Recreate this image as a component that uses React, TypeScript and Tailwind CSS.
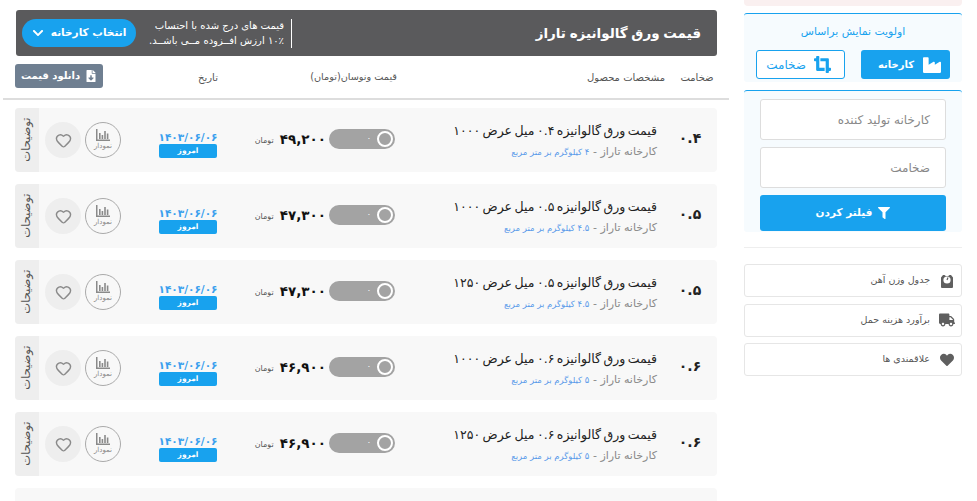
import React from "react";
import { FaChevronDown, FaFilter, FaTruck, FaHeart, FaFileDownload, FaIndustry, FaCropAlt } from "react-icons/fa";
import { Heart } from "lucide-react";

const rows = [
  { t: "۰.۴", title: "قیمت ورق گالوانیزه ۰.۴ میل عرض ۱۰۰۰", w: "۴", price: "۴۹,۲۰۰" },
  { t: "۰.۵", title: "قیمت ورق گالوانیزه ۰.۵ میل عرض ۱۰۰۰", w: "۴.۵", price: "۴۷,۳۰۰" },
  { t: "۰.۵", title: "قیمت ورق گالوانیزه ۰.۵ میل عرض ۱۲۵۰", w: "۴.۵", price: "۴۷,۳۰۰" },
  { t: "۰.۶", title: "قیمت ورق گالوانیزه ۰.۶ میل عرض ۱۰۰۰", w: "۵", price: "۴۶,۹۰۰" },
  { t: "۰.۶", title: "قیمت ورق گالوانیزه ۰.۶ میل عرض ۱۲۵۰", w: "۵", price: "۴۶,۹۰۰" },
];

function ChartIcon() {
  return (
    <svg width="14" height="12" viewBox="0 0 14 12" fill="#8a8a8a">
      <rect x="0" y="0" width="1.5" height="12" />
      <rect x="0" y="10.5" width="14" height="1.5" />
      <rect x="3" y="4" width="1.6" height="6" />
      <rect x="5.6" y="6" width="1.6" height="4" />
      <rect x="8.2" y="2" width="1.6" height="8" />
      <rect x="10.8" y="4.500" width="1.6" height="5.500" />
    </svg>
  );
}

function WeightIcon() {
  return (
    <svg width="14" height="14" viewBox="0 0 14 14">
      <path d="M3 1h1.5a3.6 3.6 0 0 0 5 0H11l2 2.500V13a1 1 0 0 1-1 1H2a1 1 0 0 1-1-1V3.500z" fill="#5f5f5f" />
      <circle cx="7" cy="6" r="3.600" fill="#fff" />
      <path d="M7 6l1-2.500" stroke="#5f5f5f" strokeWidth="1.200" />
    </svg>
  );
}

function Row({ r }: { r: (typeof rows)[number] }) {
  return (
    <div className="flex h-[64px] w-[702px] shrink-0 items-stretch overflow-hidden rounded bg-[#f8f8f8]">
      <div className="flex w-[60px] shrink-0 items-center justify-center pb-[3px] pl-[6px] text-[14px] font-bold text-[#222]">{r.t}</div>
      <div className="flex w-[262px] shrink-0 flex-col justify-center pt-[2px]">
        <div className="whitespace-nowrap text-[12.500px] leading-[22px] text-[#222] [word-spacing:-1.500px]">{r.title}</div>
        <div className="whitespace-nowrap text-[11px] leading-[20px] text-[#888]">
          کارخانه تاراز - <span className="text-[8.500px] text-[#5b9bea]">{r.w} کیلوگرم بر متر مربع</span>
        </div>
      </div>
      <div className="flex w-[178px] shrink-0 items-center pb-[2px]">
        <div className="flex h-[20px] w-[66px] shrink-0 items-center justify-start rounded-full bg-[#a3a3a3] pr-[2px]">
          <div className="size-[16px] rounded-full border-2 border-white bg-[#a3a3a3]" />
          <span className="mr-[6px] text-[8px] text-white">۰</span>
        </div>
        <div className="mr-[3px] whitespace-nowrap text-[13.500px] font-bold text-[#111]">{r.price}</div>
        <div className="mr-[6px] whitespace-nowrap pt-[3px] text-[8px] text-[#555]">تومان</div>
      </div>
      <div className="flex w-[58px] shrink-0 flex-col items-center justify-center pt-[9px]">
        <div className="whitespace-nowrap text-[10.500px] font-bold leading-[13px] text-[#3aa0ee]">۱۴۰۳/۰۶/۰۶</div>
        <div className="flex h-[14px] w-[58px] items-center justify-center rounded-[2px] bg-[#18a2ee] text-[7.500px] font-bold text-white">امروز</div>
      </div>
      <div className="mr-[38px] flex h-full shrink-0 items-center gap-[4px]">
        <div className="flex size-[36px] flex-col items-center justify-center rounded-full border border-[#aaa]">
          <ChartIcon />
          <span className="text-[7px] leading-[10px] text-[#888]">نمودار</span>
        </div>
        <div className="flex size-[36px] items-center justify-center rounded-full bg-[#eeeeee]">
          <Heart size={17} color="#8a8a8a" />
        </div>
      </div>
      <div className="mr-[6px] flex w-[24px] shrink-0 items-center justify-center bg-[#eeeeee]">
        <span className="-rotate-90 whitespace-nowrap text-[11.500px] text-[#555]">توضیحات</span>
      </div>
    </div>
  );
}

function SideLink({ icon, label }: { icon: React.ReactNode; label: string }) {
  return (
    <div className="flex h-[33px] shrink-0 items-center gap-[9px] rounded-[3px] border border-[#e6e6e6] pr-[6px] text-[9.500px] text-[#555]">
      <span className="flex w-[16px] justify-center">{icon}</span>
      {label}
    </div>
  );
}

export default function App() {
  return (
    <div dir="rtl" className="relative flex h-[501px] w-[977px] justify-end gap-[15px] overflow-hidden bg-white pl-[3px] pr-[15px] font-['DejaVu_Sans',sans-serif]">
      <aside className="order-1 flex w-[218px] shrink-0 flex-col">
        <div className="h-[6px] shrink-0 rounded-b bg-[#faf0f0]" />
        <div className="mt-[7px] h-[69px] shrink-0 rounded-[3px] border-t border-[#18a2ee] bg-[#f6fbfe] px-[12px]">
          <div className="mt-[11px] whitespace-nowrap text-center text-[10.800px] leading-[14px] text-[#18a2ee]">اولویت نمایش براساس</div>
          <div className="mt-[11px] flex justify-between">
            <div className="flex h-[29px] w-[89px] items-center justify-start gap-[9px] rounded-[3px] bg-[#18a2ee] pr-[9px] text-[10px] font-bold text-white">
              <FaIndustry size={18} />
              کارخانه
            </div>
            <div className="flex h-[29px] w-[89px] items-center justify-start gap-[8px] rounded-[3px] border border-[#18a2ee] bg-white pr-[13px] text-[12px] text-[#18a2ee]">
              <FaCropAlt size={17} />
              ضخامت
            </div>
          </div>
        </div>
        <div className="mt-[8px] h-[142px] shrink-0 rounded-[3px] border-t border-[#18a2ee] bg-[#f6fbfe] px-[16px] pt-[8px]">
          <div className="flex h-[41px] items-center whitespace-nowrap rounded-[3px] border border-[#ddd] bg-white pr-[15px] text-[12px] text-[#888]">کارخانه تولید کننده</div>
          <div className="mt-[7px] flex h-[41px] items-center rounded-[3px] border border-[#ddd] bg-white pr-[15px] text-[12px] text-[#888]">ضخامت</div>
          <div className="mt-[7px] flex h-[36px] items-center justify-center gap-[6px] rounded-[3px] bg-[#18a2ee] text-[10.500px] font-bold text-white">
            <FaFilter size={12} />
            فیلتر کردن
          </div>
        </div>
        <div className="mt-[15px] h-px shrink-0 bg-[#eeeeee]" />
        <div className="mt-[16px] flex flex-col gap-[6.500px]">
          <SideLink icon={<WeightIcon />} label="جدول وزن آهن" />
          <SideLink icon={<FaTruck size={16} color="#5f5f5f" />} label="برآورد هزینه حمل" />
          <SideLink icon={<FaHeart size={14} color="#5f5f5f" />} label="علاقمندی ها" />
        </div>
      </aside>

      <main className="order-2 flex w-[726px] shrink-0 flex-col">
        <div className="mr-[12px] mt-[10px] flex h-[46px] w-[701px] shrink-0 items-center rounded-[3px] bg-[#5a5a5c] text-white">
          <div className="w-[425px] shrink-0 whitespace-nowrap pr-[16px] text-[13.500px] font-bold [word-spacing:-1px]">قیمت ورق گالوانیزه تاراز</div>
          <div className="flex h-[29px] w-[142px] shrink-0 flex-col justify-center border-r border-white pr-[7px] text-[10px] leading-[15px]">
            <div className="whitespace-nowrap">قیمت های درج شده با احتساب</div>
            <div className="whitespace-nowrap">۱۰٪ ارزش افــزوده مــی باشــد.</div>
          </div>
          <div className="mr-[14px] flex h-[28px] w-[114px] shrink-0 items-center justify-center gap-[7px] rounded-full bg-[#18a2ee] text-[10.500px] font-bold">
            انتخاب کارخانه
            <FaChevronDown size={12} />
          </div>
        </div>
        <div className="flex h-[44px] shrink-0 items-center border-b-[2px] border-[#dddddd] text-[10px] text-[#555]">
          <div className="mr-[15px] w-[34px] shrink-0 whitespace-nowrap pt-[1px] text-center">ضخامت</div>
          <div className="mr-[15px] w-[78px] shrink-0 whitespace-nowrap pt-[1px]">مشخصات محصول</div>
          <div className="mr-[190px] w-[86px] shrink-0 whitespace-nowrap pt-[1px] text-[9.700px]">قیمت ونوسان(تومان)</div>
          <div className="mr-[73px] w-[60px] shrink-0 whitespace-nowrap pt-[1px] text-center">تاریخ</div>
          <div className="mb-[3px] mr-[75px] flex h-[24px] w-[88px] shrink-0 items-center justify-center gap-[5px] rounded-[3px] bg-[#6f7f91] text-[10px] font-bold text-white">
            <FaFileDownload size={12} />
            دانلود قیمت
          </div>
        </div>
        <div className="mr-[12px] mt-[8px] flex shrink-0 flex-col gap-[12px]">
          {rows.map((r, i) => (
            <Row key={i} r={r} />
          ))}
          <div className="h-[64px] w-[702px] shrink-0 rounded bg-[#f8f8f8]" />
        </div>
      </main>
    </div>
  );
}
